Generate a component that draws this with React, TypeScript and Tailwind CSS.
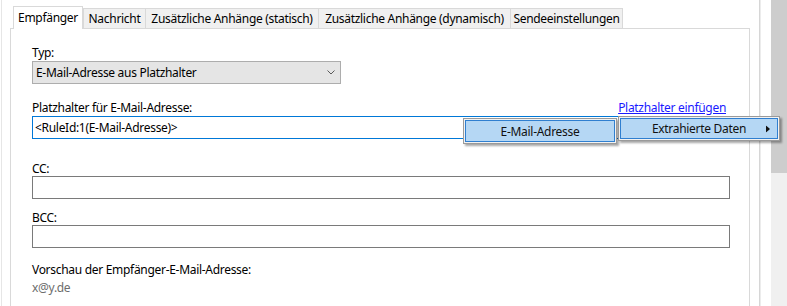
import React from 'react'

const tabs = [
  { label: 'Nachricht', w: 'w-[63px]' },
  { label: 'Zusätzliche Anhänge (statisch)', w: 'w-[174px]' },
  { label: 'Zusätzliche Anhänge (dynamisch)', w: 'w-[193px]' },
  { label: 'Sendeeinstellungen', w: 'w-[113px]' },
]

function Field({ focused, children }: { focused?: boolean; children?: React.ReactNode }) {
  return (
    <div
      className={
        focused
          ? 'shrink-0 h-[23px] w-[698px] border border-[#0078d7] bg-white flex items-center pl-[2px]'
          : 'shrink-0 h-[23px] w-[698px] border border-[#7a7a7a] bg-white flex items-center pl-[2px]'
      }
    >
      {children}
    </div>
  )
}

function MenuItem({ label, arrow }: { label: string; arrow?: boolean }) {
  return (
    <div className="h-full w-full border border-[#9a9a9a] bg-[#f2f2f2] p-px shadow-[2px_2px_2px_rgba(0,0,0,0.35)]">
      <div className="h-full w-full border border-[#2f7fd0] bg-[#b5d7f4] flex items-center justify-center relative text-[#111]">
        <span>{label}</span>
        {arrow && (
          <svg className="absolute right-[7px] top-1/2 -translate-y-1/2" width="4" height="7" viewBox="0 0 4 7">
            <path d="M0 0 L4 3.5 L0 7 Z" fill="#111" />
          </svg>
        )}
      </div>
    </div>
  )
}

export default function App() {
  return (
    <div className="relative flex w-[787px] h-[306px] overflow-hidden bg-white text-[12px] leading-[15px] tracking-[-0.3px] text-black font-['Noto_Sans',sans-serif]">
      {/* outer frame line */}
      <div className="ml-px w-px bg-[#e6e6e6]" />

      {/* tab control */}
      <div className="ml-[8px] w-[740px] flex flex-col">
        <div className="shrink-0 flex items-end h-[28px] pl-[3px]">
          <div className="relative z-10 -mb-px h-[23px] w-[70px] border border-b-0 border-[#d9d9d9] bg-white flex items-center justify-center pb-[2px]">
            Empfänger
          </div>
          {tabs.map((t, i) => (
            <div
              key={t.label}
              className={
                (i === 0 ? 'ml-0 ' : '-ml-px ') +
                t.w +
                ' h-[20px] border border-b-0 border-[#d9d9d9] bg-[#f0f0f0] flex items-center justify-center'
              }
            >
              {t.label}
            </div>
          ))}
        </div>

        <div className="shrink-0 h-[400px] border border-[#d9d9d9] bg-white pl-[21px] pt-[16px] flex flex-col">
          <div>Typ:</div>
          <div className="shrink-0 mt-px h-[23px] w-[309px] border border-[#adadad] bg-[#e5e5e5] flex items-center justify-between pl-[3px] pr-[5px]">
            <span>E-Mail-Adresse aus Platzhalter</span>
            <svg width="8" height="5" viewBox="0 0 8 5">
              <path d="M0.5 0.5 L4 4 L7.5 0.5" fill="none" stroke="#5a5a5a" strokeWidth="1" />
            </svg>
          </div>

          <div className="mt-[16px] w-[698px] flex justify-between">
            <span>Platzhalter für E-Mail-Adresse:</span>
            <span className="pr-[4px] text-[#1a1aff] underline">Platzhalter einfügen</span>
          </div>
          <div className="mt-px">
            <Field focused>&lt;RuleId:1(E-Mail-Adresse)&gt;</Field>
          </div>

          <div className="mt-[22px]">CC:</div>
          <Field />

          <div className="mt-[11px]">BCC:</div>
          <Field />

          <div className="mt-[14px]">Vorschau der Empfänger-E-Mail-Adresse:</div>
          <div className="mt-[3px] text-[#6d6d6d]">x@y.de</div>
        </div>
      </div>

      {/* window edge */}
      <div className="ml-[9px] w-[2px] border-l border-[#d6d6d6] bg-[#ececec]" />

      {/* scrollbar */}
      <div className="ml-[10px] w-[16px] flex flex-col bg-[#f0f0f0]">
        <div className="h-[173px] bg-[#cdcdcd]" />
      </div>

      {/* context menus */}
      <div className="absolute left-[463px] top-[118px] w-[154px] h-[26px]">
        <MenuItem label="E-Mail-Adresse" />
      </div>
      <div className="absolute left-[618px] top-[116px] w-[162px] h-[25px]">
        <MenuItem label="Extrahierte Daten" arrow />
      </div>
    </div>
  )
}
